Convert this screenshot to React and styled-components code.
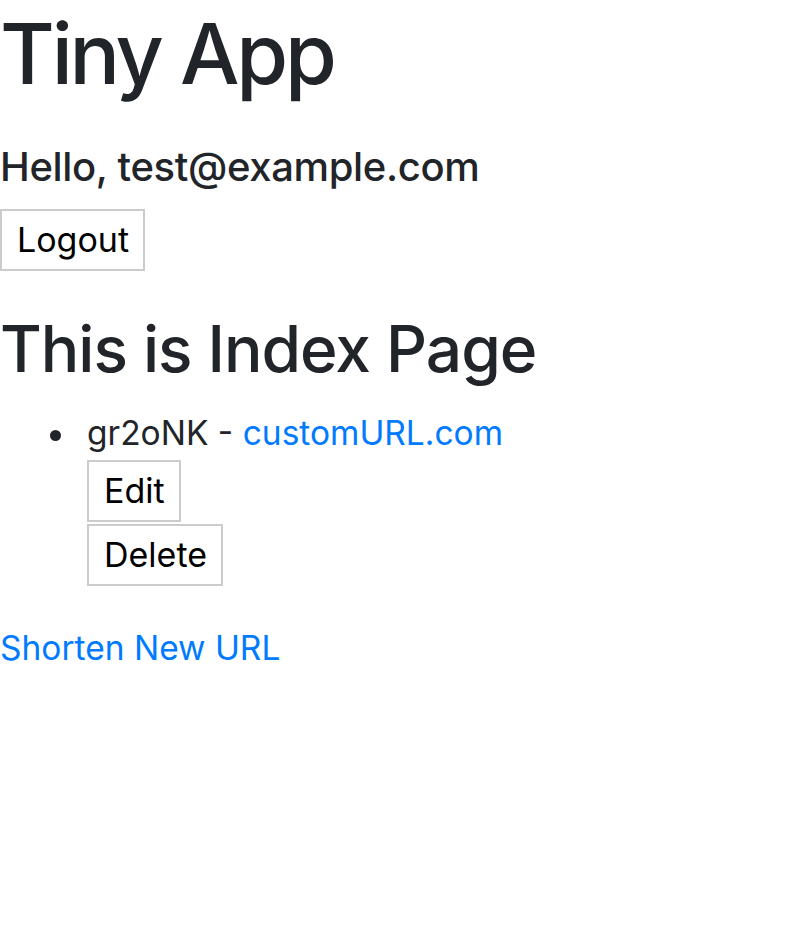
import React from 'react';
import styled, {createGlobalStyle} from "styled-components";

const GlobalStyle = createGlobalStyle`
    body {
        margin: 0;
        font-family: Inter, "Liberation Sans", sans-serif;
        font-size: 33.5px;
        line-height: 1.5;
        color: #212529;
        background: #fff;
    }
`;

const urls = [{id: "gr2oNK", long: "customURL.com"}];

export default function App() {
    return <Page>
        <GlobalStyle/>
        <Title>Tiny App</Title>
        <Greeting>Hello, test@example.com</Greeting>
        <form onSubmit={e => e.preventDefault()}>
            <Button type="submit">Logout</Button>
        </form>
        <PageTitle>This is Index Page</PageTitle>
        <UrlList>
            {urls.map(url => <Item key={url.id}>
                {url.id} - <Link href="#">{url.long}</Link>
                <ItemForm onSubmit={e => e.preventDefault()}>
                    <Button type="submit">Edit</Button>
                </ItemForm>
                <ItemForm onSubmit={e => e.preventDefault()}>
                    <Button type="submit">Delete</Button>
                </ItemForm>
            </Item>)}
        </UrlList>
        <Link href="#">Shorten New URL</Link>
    </Page>
}

const Page = styled.div`
    display: block;
    padding-top: 4px;
`;

const Title = styled.h1`
    font-size: 84px;
    font-weight: 500;
    line-height: 1.2;
    letter-spacing: -3.2px;
    margin: 0 0 38.6px;
`;

const Greeting = styled.h5`
    font-size: 40px;
    font-weight: 500;
    line-height: 48px;
    letter-spacing: -0.35px;
    margin: 0 0 17.6px;
`;

const PageTitle = styled.h2`
    font-size: 64px;
    font-weight: 500;
    line-height: 1.2;
    letter-spacing: -1px;
    margin: 40.3px 0 19.5px;
`;

const Button = styled.button`
    display: block;
    font-family: Inter, "Liberation Sans", sans-serif;
    font-size: 34px;
    line-height: 51px;
    color: #000;
    background: #fff;
    border: 2px solid #cccccc;
    border-radius: 0;
    padding: 3.5px 14px 3.5px 15px;
    margin: 0;
`;

const UrlList = styled.ul`
    padding-left: 87px;
    margin: 0 0 37.6px;
    list-style: none;
`;

const Item = styled.li`
    &::before {
        content: "";
        display: inline-block;
        width: 11px;
        height: 11px;
        border-radius: 50%;
        background: #212529;
        vertical-align: middle;
        margin: 0 26px 0 -37px;
    }
`;

const ItemForm = styled.form`
    margin-top: 2px;
`;

const Link = styled.a`
    color: #007bff;
    text-decoration: none;
`;
